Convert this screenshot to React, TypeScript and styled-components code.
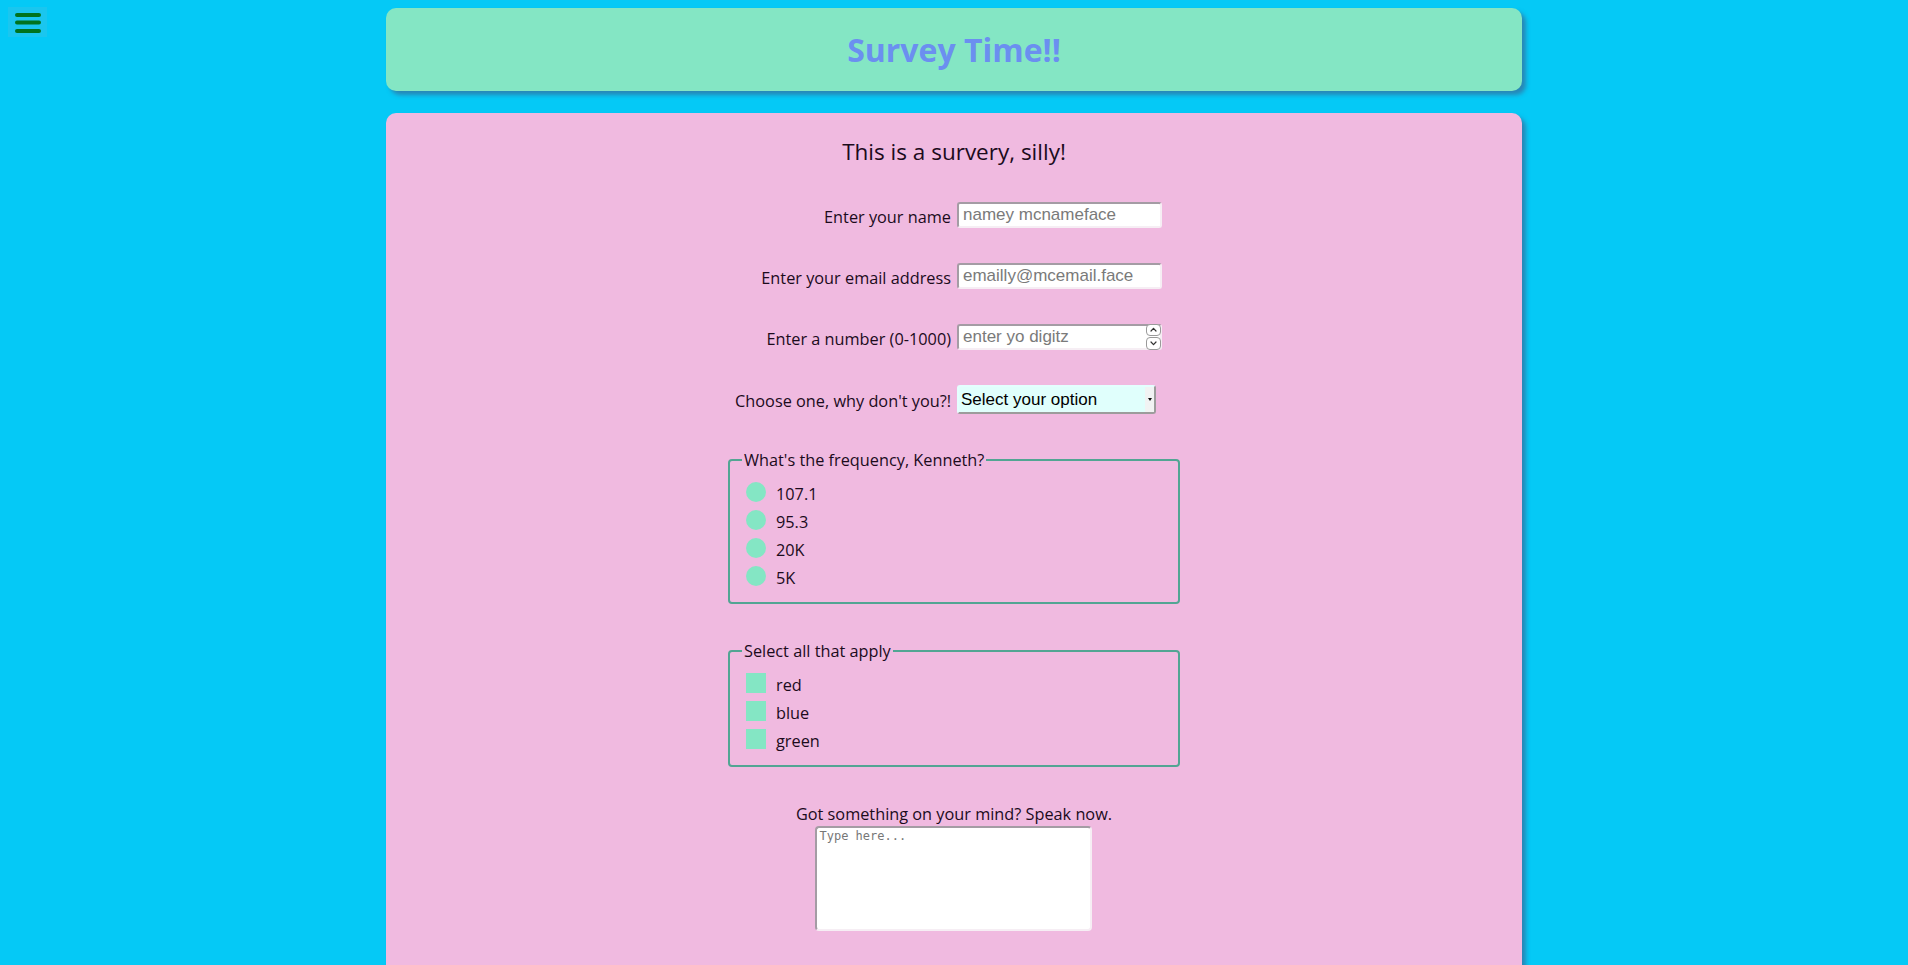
import React from "react";
import styled, { createGlobalStyle } from "styled-components";

const GlobalStyle = createGlobalStyle`
  html, body {
    margin: 0;
    padding: 0;
  }
  body {
    background: #05c9f6;
    font-family: "Open Sans", "Noto Sans", sans-serif;
    color: #1c0b1c;
  }
  * {
    box-sizing: border-box;
  }
`;

const MenuButton = styled.button`
  position: absolute;
  top: 7px;
  left: 8px;
  width: 39px;
  height: 30px;
  padding: 0;
  border: none;
  background: #1ac6ef;
  display: flex;
  align-items: center;
  justify-content: center;
  cursor: pointer;
`;

const Page = styled.div`
  width: 1136px;
  margin: 8px auto 0;
  display: flex;
  flex-direction: column;
  gap: 22px;
`;

const Header = styled.header`
  height: 83px;
  border-radius: 10px;
  background: #84e6c4;
  box-shadow: 4px 4px 4px rgba(70, 80, 130, 0.55);
  display: flex;
  align-items: center;
  justify-content: center;
`;

const Title = styled.h1`
  margin: 0;
  font-size: 32px;
  font-weight: 700;
  color: #6b8ff0;
  line-height: normal;
`;

const Card = styled.main`
  border-radius: 10px;
  background: #f0bae0;
  box-shadow: 4px 4px 4px rgba(70, 80, 130, 0.55);
  padding: 21px 0 60px;
`;

const Form = styled.form`
  display: flex;
  flex-direction: column;
  align-items: center;
  gap: 35px;
`;

const Subtitle = styled.h2`
  margin: 2px 0 -2px;
  font-size: 22.5px;
  font-weight: 400;
  line-height: 32.7px;
`;

const Row = styled.div`
  width: 100%;
  display: grid;
  grid-template-columns: 1fr 1fr;
  column-gap: 6px;
  align-items: center;
`;

const RowLabel = styled.label`
  justify-self: end;
  font-size: 16.3px;
  line-height: 22px;
  padding-top: 4px;
`;

const Field = styled.div`
  justify-self: start;
  position: relative;
  display: flex;
`;

const TextInput = styled.input`
  width: 205px;
  height: 26px;
  margin: 0;
  padding: 0 4px;
  border: 2px solid;
  border-color: #a49ca4 #f6eef4 #f6eef4 #a49ca4;
  border-radius: 3px;
  background: #ffffff;
  font-family: "Liberation Sans", Arial, sans-serif;
  font-size: 17px;
  color: #111;
  outline: none;
  &::placeholder {
    color: #7a7a7a;
  }
  &::-webkit-inner-spin-button,
  &::-webkit-outer-spin-button {
    -webkit-appearance: none;
    margin: 0;
  }
  &[type="number"] {
    -moz-appearance: textfield;
  }
`;

const Spinner = styled.span`
  position: absolute;
  right: 1px;
  top: 0;
  width: 15px;
  height: 26px;
  display: flex;
  flex-direction: column;
  gap: 1px;
`;

const SpinBtn = styled.span`
  flex: 1;
  border: 1px solid #9a9a9a;
  border-radius: 4px;
  background: #ffffff;
  display: flex;
  align-items: center;
  justify-content: center;
`;

const SelectWrap = styled.div`
  justify-self: start;
  position: relative;
  display: flex;
  &::after {
    content: "";
    position: absolute;
    right: 2px;
    top: 2px;
    bottom: 2px;
    width: 9px;
    background: #f1f3f3;
    pointer-events: none;
  }
  &::before {
    content: "";
    position: absolute;
    right: 4px;
    top: 13px;
    width: 0;
    height: 0;
    border-left: 2.5px solid transparent;
    border-right: 2.5px solid transparent;
    border-top: 3px solid #111;
    z-index: 1;
    pointer-events: none;
  }
`;

const Select = styled.select`
  appearance: none;
  -webkit-appearance: none;
  width: 199px;
  height: 29px;
  margin: 0;
  padding: 0 0 0 2px;
  border: 2px solid;
  border-color: #e4fffe #9c9c9c #9c9c9c #e4fffe;
  border-radius: 3px;
  background: #e0fffc;
  font-family: "Liberation Sans", Arial, sans-serif;
  font-size: 17px;
  color: #000;
  outline: none;
`;

const Fieldset = styled.fieldset<{ $offset?: number }>`
  width: 452px;
  margin: ${(p) => p.$offset ?? 0}px 0 0;
  padding: 11px 12px 13px;
  border: 2px solid #52a593;
  border-radius: 4px;
  display: flex;
  flex-direction: column;
  gap: 5px;
`;

const Legend = styled.legend`
  padding: 0 2px;
  font-size: 16.3px;
  line-height: 22px;
`;

const Option = styled.label`
  height: 23px;
  padding-left: 4px;
  display: flex;
  align-items: flex-start;
  gap: 10px;
  font-size: 16.3px;
  line-height: 22px;
`;

const Choice = styled.input<{ $round?: boolean }>`
  appearance: none;
  -webkit-appearance: none;
  width: 20px;
  height: 20px;
  margin: 0;
  border: none;
  background: #84e6c4;
  border-radius: ${(p) => (p.$round ? "50%" : "0")};
  flex: none;
`;

const OptionText = styled.span`
  padding-top: 1px;
`;

const CommentGroup = styled.div`
  margin-top: 1px;
  display: flex;
  flex-direction: column;
  align-items: center;
  gap: 1px;
`;

const CommentLabel = styled.label`
  font-size: 16.3px;
  line-height: 22px;
`;

const TextArea = styled.textarea`
  width: 277px;
  height: 105px;
  margin: 0;
  padding: 1px 2px;
  border: 2px solid;
  border-color: #a49ca4 #f6eef4 #f6eef4 #a49ca4;
  border-radius: 4px;
  background: #ffffff;
  font-family: "DejaVu Sans Mono", monospace;
  font-size: 12px;
  resize: none;
  outline: none;
  &::placeholder {
    color: #777777;
  }
`;

const Chevron = ({ up }: { up?: boolean }) => (
  <svg width="7" height="5" viewBox="0 0 7 5">
    <path
      d={up ? "M1 4 L3.5 1.3 L6 4" : "M1 1 L3.5 3.7 L6 1"}
      fill="none"
      stroke="#333"
      strokeWidth="1.2"
      strokeLinecap="round"
      strokeLinejoin="round"
    />
  </svg>
);

const frequencies = ["107.1", "95.3", "20K", "5K"];
const colors = ["red", "blue", "green"];

export default function App() {
  return (
    <>
      <GlobalStyle />
      <MenuButton aria-label="menu">
        <svg width="39" height="30" viewBox="0 0 39 30">
          <g stroke="#00731f" strokeWidth="4" strokeLinecap="round">
            <line x1="9" y1="8" x2="31" y2="8" />
            <line x1="9" y1="15.5" x2="31" y2="15.5" />
            <line x1="9" y1="24" x2="31" y2="24" />
          </g>
        </svg>
      </MenuButton>
      <Page>
        <Header>
          <Title>Survey Time!!</Title>
        </Header>
        <Card>
          <Form onSubmit={(e) => e.preventDefault()}>
            <Subtitle>This is a survery, silly!</Subtitle>
            <Row>
              <RowLabel htmlFor="name">Enter your name</RowLabel>
              <Field>
                <TextInput id="name" type="text" placeholder="namey mcnameface" />
              </Field>
            </Row>
            <Row>
              <RowLabel htmlFor="email">Enter your email address</RowLabel>
              <Field>
                <TextInput id="email" type="email" placeholder="emailly@mcemail.face" />
              </Field>
            </Row>
            <Row>
              <RowLabel htmlFor="number">Enter a number (0-1000)</RowLabel>
              <Field>
                <TextInput id="number" type="number" min={0} max={1000} placeholder="enter yo digitz" />
                <Spinner>
                  <SpinBtn>
                    <Chevron up />
                  </SpinBtn>
                  <SpinBtn>
                    <Chevron />
                  </SpinBtn>
                </Spinner>
              </Field>
            </Row>
            <Row>
              <RowLabel htmlFor="dropdown">Choose one, why don't you?!</RowLabel>
              <SelectWrap>
                <Select id="dropdown" defaultValue="">
                  <option value="" disabled>
                    Select your option
                  </option>
                  <option value="a">Option A</option>
                  <option value="b">Option B</option>
                </Select>
              </SelectWrap>
            </Row>
            <Fieldset>
              <Legend>What's the frequency, Kenneth?</Legend>
              {frequencies.map((f) => (
                <Option key={f}>
                  <Choice $round type="radio" name="freq" value={f} />
                  <OptionText>{f}</OptionText>
                </Option>
              ))}
            </Fieldset>
            <Fieldset $offset={1}>
              <Legend>Select all that apply</Legend>
              {colors.map((c) => (
                <Option key={c}>
                  <Choice type="checkbox" name="colors" value={c} />
                  <OptionText>{c}</OptionText>
                </Option>
              ))}
            </Fieldset>
            <CommentGroup>
              <CommentLabel htmlFor="comments">Got something on your mind? Speak now.</CommentLabel>
              <TextArea id="comments" placeholder="Type here..." />
            </CommentGroup>
          </Form>
        </Card>
      </Page>
    </>
  );
}
